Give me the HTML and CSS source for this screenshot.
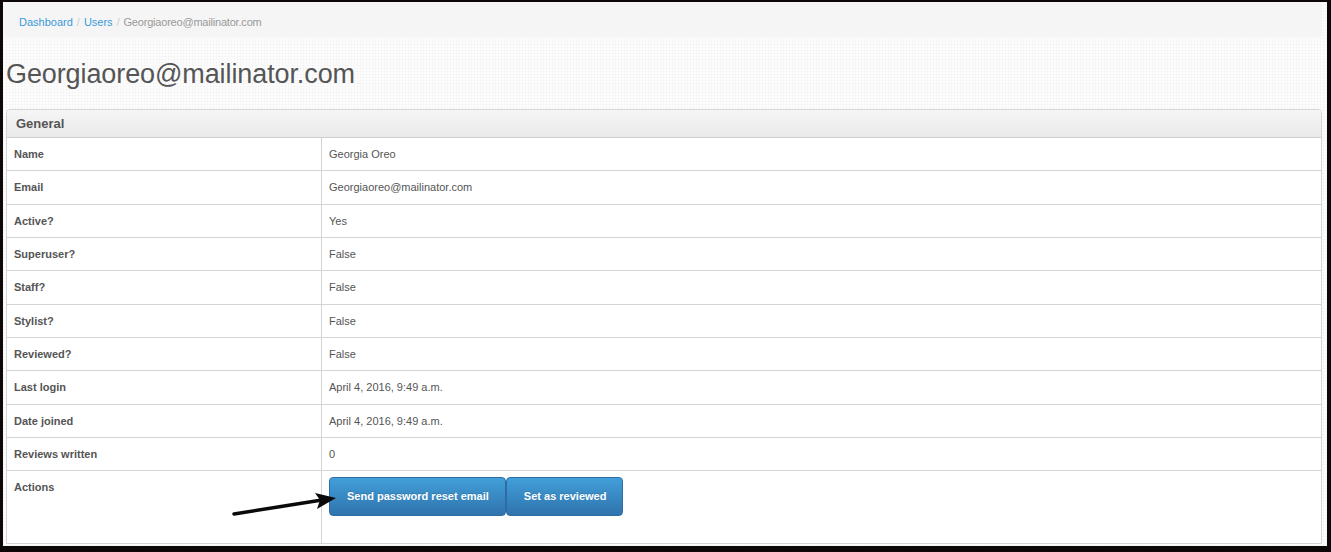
FILE: index.html
```html
<!DOCTYPE html>
<html lang="en">
<head>
    <meta charset="UTF-8">
    <meta name="viewport" content="width=device-width, initial-scale=1.0">
    <title>Georgiaoreo@mailinator.com</title>
    <link rel="stylesheet" href="styles.css">
</head>
<body>
    <div class="frame">
        <ol class="breadcrumb">
            <li><a href="#">Dashboard</a></li>
            <li><a href="#">Users</a></li>
            <li class="active">Georgiaoreo@mailinator.com</li>
        </ol>

        <h1 class="page-title">Georgiaoreo@mailinator.com</h1>

        <div class="panel">
            <div class="panel-heading">General</div>
            <table class="detail-table">
                <tr><th>Name</th><td>Georgia Oreo</td></tr>
                <tr><th>Email</th><td>Georgiaoreo@mailinator.com</td></tr>
                <tr><th>Active?</th><td>Yes</td></tr>
                <tr><th>Superuser?</th><td>False</td></tr>
                <tr><th>Staff?</th><td>False</td></tr>
                <tr><th>Stylist?</th><td>False</td></tr>
                <tr><th>Reviewed?</th><td>False</td></tr>
                <tr><th>Last login</th><td>April 4, 2016, 9:49 a.m.</td></tr>
                <tr><th>Date joined</th><td>April 4, 2016, 9:49 a.m.</td></tr>
                <tr><th>Reviews written</th><td>0</td></tr>
                <tr class="actions-row">
                    <th>Actions</th>
                    <td>
                        <div class="actions">
                            <button class="btn">Send password reset email</button>
                            <button class="btn">Set as reviewed</button>
                        </div>
                    </td>
                </tr>
            </table>
        </div>
    </div>

    <!-- annotation arrow drawn over the page -->
    <svg class="arrow" width="1331" height="552" viewBox="0 0 1331 552">
        <line x1="234" y1="514" x2="322" y2="500" stroke="#0a0a0a" stroke-width="3.5" stroke-linecap="round"/>
        <polygon points="336,498 315,493 320,500 317,509" fill="#0a0a0a"/>
    </svg>
</body>
</html>
```

FILE: styles.css
```css
html, body {
    margin: 0;
    height: 552px;
    background: #0d0707;
    overflow: hidden;
}
body {
    font-family: "Liberation Sans", Arial, sans-serif;
    font-size: 11px;
    color: #555;
    position: relative;
}
.frame {
    margin: 2px 4px 0 3px;
    height: 544px;
    overflow: hidden;
    background-color: #fdfdfd;
    background-image:
        linear-gradient(90deg, rgba(0,0,0,0.018) 1px, transparent 1px),
        linear-gradient(rgba(0,0,0,0.018) 1px, transparent 1px);
    background-size: 3px 3px;
}
.breadcrumb {
    list-style: none;
    margin: 1px 5px 0 1px;
    padding: 11px 15px 7px;
    line-height: 16px;
    background: #f5f5f5;
    display: flex;
}
.breadcrumb li + li::before {
    content: "/";
    color: #ccc;
    padding: 0 4px;
}
.breadcrumb a {
    color: #3a9ad9;
    text-decoration: none;
}
.breadcrumb .active {
    color: #999;
    letter-spacing: -0.2px;
}
.page-title {
    margin: 22px 0 20px 3px;
    font-size: 27px;
    line-height: 30px;
    font-weight: normal;
    color: #555;
    letter-spacing: -0.1px;
}
.panel {
    margin: 0 5px 0 3px;
    border: 1px solid #d4d4d4;
    border-radius: 4px 4px 0 0;
    background: #fff;
}
.panel-heading {
    padding: 5px 9px;
    line-height: 17px;
    font-size: 13px;
    font-weight: bold;
    color: #555;
    background: linear-gradient(#f6f6f6, #e9e9e9);
    border-bottom: 1px solid #d0d0d0;
    border-radius: 3px 3px 0 0;
}
.detail-table {
    width: 100%;
    border-collapse: separate;
    border-spacing: 0;
}
.detail-table th,
.detail-table td {
    padding: 8px 7px;
    line-height: 16.33px;
    text-align: left;
    vertical-align: top;
    border-bottom: 1px solid #d4d4d4;
}
.detail-table th {
    width: 300px;
    font-weight: bold;
    border-right: 1px solid #d4d4d4;
}
.detail-table tr:last-child th,
.detail-table tr:last-child td {
    border-bottom: none;
}
.actions {
    display: flex;
    margin: -2px 0 19px;
}
.btn {
    font-family: inherit;
    font-size: 11px;
    font-weight: bold;
    line-height: 15px;
    color: #fff;
    padding: 11px 16px 11px 17px;
    border: 1px solid #2e6da4;
    border-radius: 4px;
    background: linear-gradient(#429fd9, #2f73ad);
    text-shadow: 0 -1px 0 rgba(0,0,0,0.15);
    cursor: pointer;
}
.arrow {
    position: absolute;
    left: 0;
    top: 0;
    pointer-events: none;
}
```
